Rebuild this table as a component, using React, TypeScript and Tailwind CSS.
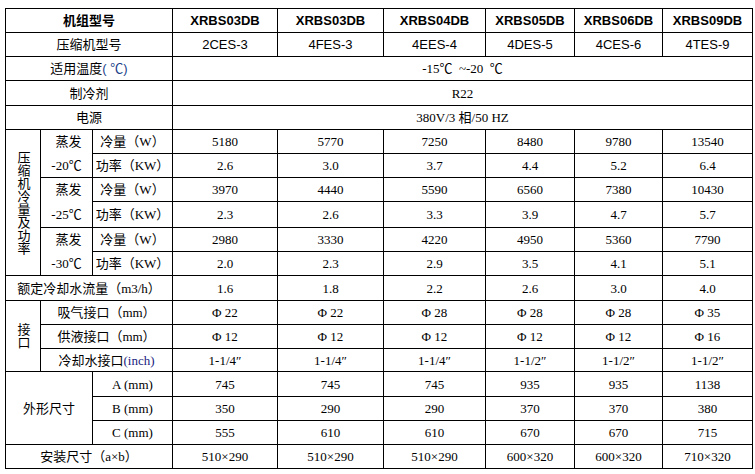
import React from "react";

const serif = "font-['Liberation_Serif','Noto_Sans_CJK_SC',serif]";
const sans = "font-['Liberation_Sans','Noto_Sans_CJK_SC',sans-serif]";

const models = ["XRBS03DB", "XRBS03DB", "XRBS04DB", "XRBS05DB", "XRBS06DB", "XRBS09DB"];
const compressors = ["2CES-3", "4FES-3", "4EES-4", "4DES-5", "4CES-6", "4TES-9"];

const perf = [
  {
    temp: "-20℃",
    cool: ["5180", "5770", "7250", "8480", "9780", "13540"],
    power: ["2.6", "3.0", "3.7", "4.4", "5.2", "6.4"],
    h: ["h-[24px]", "h-[24px]"],
  },
  {
    temp: "-25℃",
    cool: ["3970", "4440", "5590", "6560", "7380", "10430"],
    power: ["2.3", "2.6", "3.3", "3.9", "4.7", "5.7"],
    h: ["h-[24px]", "h-[26px]"],
  },
  {
    temp: "-30℃",
    cool: ["2980", "3330", "4220", "4950", "5360", "7790"],
    power: ["2.0", "2.3", "2.9", "3.5", "4.1", "5.1"],
    h: ["h-[24px]", "h-[24px]"],
  },
];

const ports = [
  { label: "吸气接口（mm）", vals: ["Φ 22", "Φ 22", "Φ 28", "Φ 28", "Φ 28", "Φ 35"], h: "h-[24px]" },
  { label: "供液接口（mm）", vals: ["Φ 12", "Φ 12", "Φ 12", "Φ 12", "Φ 12", "Φ 16"], h: "h-[24px]" },
];

const dims = [
  { label: "A (mm)", vals: ["745", "745", "745", "935", "935", "1138"], h: "h-[25px]" },
  { label: "B (mm)", vals: ["350", "290", "290", "370", "370", "380"], h: "h-[24px]" },
  { label: "C (mm)", vals: ["555", "610", "610", "670", "670", "715"], h: "h-[24px]" },
];

const td = "border border-black p-0 text-center align-middle whitespace-nowrap";

function Cells({ vals, font = serif }: { vals: string[]; font?: string }) {
  return (
    <>
      {vals.map((v, i) => (
        <td key={i} className={`${td} ${font}`}>
          {v}
        </td>
      ))}
    </>
  );
}

// upright vertical label (压缩机冷量及功率 / 接口)
function Vert({ text }: { text: string }) {
  return (
    <div className="flex justify-center">
      <span className="[writing-mode:vertical-rl] [text-orientation:upright] leading-[13px]">{text}</span>
    </div>
  );
}

export default function App() {
  return (
    <div className="w-[755px] h-[474px] bg-white pt-[8px] pl-[5px] text-black text-[13px] leading-none">
      <table className="table-fixed border-collapse w-[748px]">
        <colgroup>
          <col className="w-[35px]" />
          <col className="w-[52px]" />
          <col className="w-[80px]" />
          <col className="w-[105px]" />
          <col className="w-[106px]" />
          <col className="w-[102px]" />
          <col className="w-[89px]" />
          <col className="w-[88px]" />
          <col className="w-[90px]" />
        </colgroup>
        <tbody>
          <tr className="h-[24px]">
            <td colSpan={3} className={`${td} ${sans} font-bold`}>
              机组型号
            </td>
            <Cells vals={models} font={`${sans} font-bold`} />
          </tr>
          <tr className="h-[24px]">
            <td colSpan={3} className={`${td} ${sans}`}>
              压缩机型号
            </td>
            <Cells vals={compressors} font={sans} />
          </tr>
          <tr className="h-[24px]">
            <td colSpan={3} className={`${td} ${sans}`}>
              适用温度<span className="text-[#1c3f8a]">( ℃)</span>
            </td>
            <td colSpan={6} className={`${td} ${serif} whitespace-pre`}>
              {"-15℃  ~-20  ℃"}
            </td>
          </tr>
          <tr className="h-[25px]">
            <td colSpan={3} className={`${td} ${sans}`}>
              制冷剂
            </td>
            <td colSpan={6} className={`${td} ${serif}`}>
              R22
            </td>
          </tr>
          <tr className="h-[24px]">
            <td colSpan={3} className={`${td} ${sans}`}>
              电源
            </td>
            <td colSpan={6} className={`${td} ${serif}`}>
              380V/3 相/50 HZ
            </td>
          </tr>

          {perf.map((g, gi) => (
            <React.Fragment key={gi}>
              <tr className={g.h[0]}>
                {gi === 0 && (
                  <td rowSpan={6} className={`${td} ${sans}`}>
                    <Vert text="压缩机冷量及功率" />
                  </td>
                )}
                <td className={`${td} ${serif} border-b-0`}>
                  <span className="pl-[4px]">蒸发</span>
                </td>
                <td className={`${td} ${serif}`}>冷量（W）</td>
                <Cells vals={g.cool} />
              </tr>
              <tr className={g.h[1]}>
                <td className={`${td} ${serif} border-t-0`}>{g.temp}</td>
                <td className={`${td} ${serif}`}>功率（KW）</td>
                <Cells vals={g.power} />
              </tr>
            </React.Fragment>
          ))}

          <tr className="h-[25px]">
            <td colSpan={3} className={`${td} ${serif}`}>
              额定冷却水流量（m3/h）
            </td>
            <Cells vals={["1.6", "1.8", "2.2", "2.6", "3.0", "4.0"]} />
          </tr>

          {ports.map((p, pi) => (
            <tr key={pi} className={p.h}>
              {pi === 0 && (
                <td rowSpan={3} className={`${td} ${sans}`}>
                  <Vert text="接口" />
                </td>
              )}
              <td colSpan={2} className={`${td} ${serif}`}>
                {p.label}
              </td>
              <Cells vals={p.vals} />
            </tr>
          ))}
          <tr className="h-[23px]">
            <td colSpan={2} className={`${td} ${serif}`}>
              冷却水接口<span className="text-[#1a237e]">(inch)</span>
            </td>
            <Cells vals={["1-1/4″", "1-1/4″", "1-1/4″", "1-1/2″", "1-1/2″", "1-1/2″"]} />
          </tr>

          {dims.map((d, di) => (
            <tr key={di} className={d.h}>
              {di === 0 && (
                <td colSpan={2} rowSpan={3} className={`${td} ${sans}`}>
                  外形尺寸
                </td>
              )}
              <td className={`${td} ${serif}`}>{d.label}</td>
              <Cells vals={d.vals} />
            </tr>
          ))}

          <tr className="h-[24px]">
            <td colSpan={3} className={`${td} ${serif}`}>
              安装尺寸（a×b）
            </td>
            <Cells vals={["510×290", "510×290", "510×290", "600×320", "600×320", "710×320"]} />
          </tr>
        </tbody>
      </table>
    </div>
  );
}
